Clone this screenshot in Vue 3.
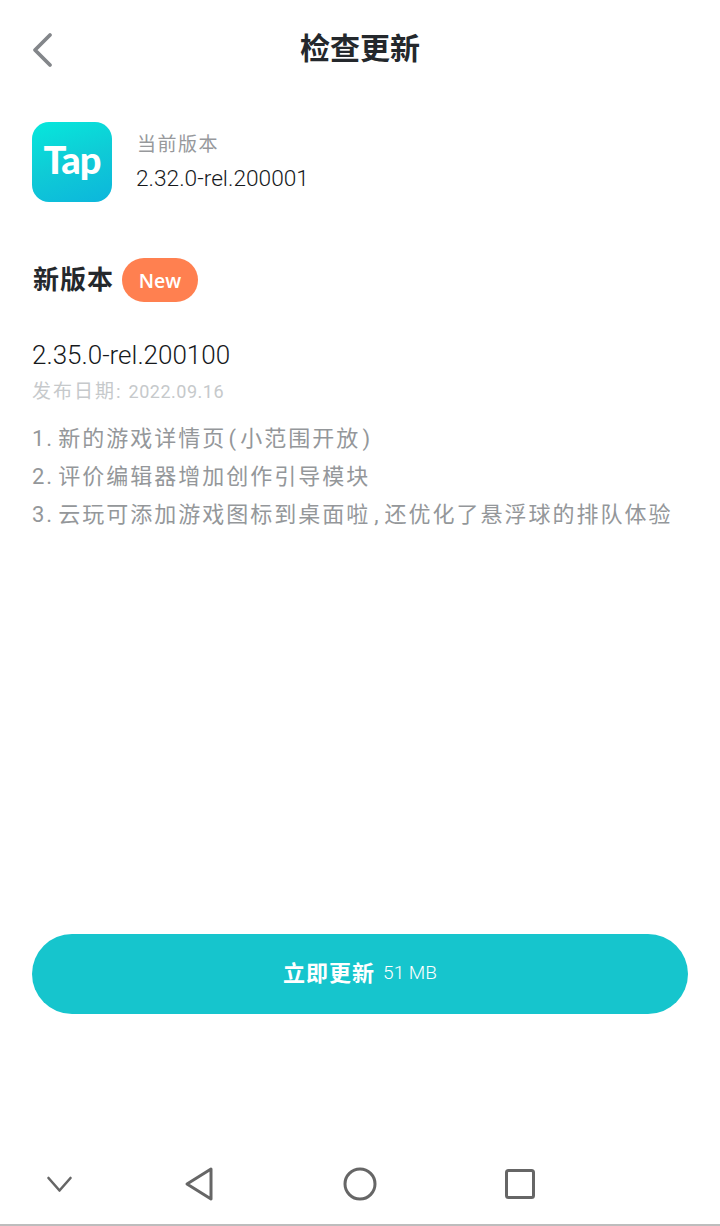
<template>
  <div class="page">
    <header class="top-bar">
      <svg class="back" width="24" height="36" viewBox="0 0 24 36">
        <path d="M20 3 L5 18 L20 33" fill="none" stroke="#83868a" stroke-width="3.8" stroke-linejoin="round" stroke-linecap="round" />
      </svg>
      <h1 class="title">检查更新</h1>
    </header>

    <section class="current">
      <div class="logo">Tap</div>
      <div class="current-info">
        <div class="current-label">当前版本</div>
        <div class="current-version">{{ currentVersion }}</div>
      </div>
    </section>

    <section class="new-head">
      <span class="new-title">新版本</span>
      <span class="badge">New</span>
    </section>

    <section class="release">
      <div class="release-version">{{ newVersion }}</div>
      <div class="release-date">
        <span class="date-label">发布日期:</span>
        <span class="date-value">2022.09.16</span>
      </div>
      <ol class="notes">
        <li v-for="(note, index) in notes" :key="index">
          <span class="note-num">{{ index + 1 }}.</span>
          <span
            v-for="(part, i) in splitNote(note)"
            :key="i"
            :class="punctClass(part)"
          >{{ part }}</span>
        </li>
      </ol>
    </section>

    <button class="update-btn">
      <span class="update-text">立即更新</span>
      <span class="update-size">51 MB</span>
    </button>

    <nav class="nav-bar">
      <svg width="28" height="20" viewBox="0 0 28 20">
        <path d="M2.5 4 L13.5 16.5 L24.5 4" fill="none" stroke="#666" stroke-width="2.6" stroke-linecap="round" stroke-linejoin="round" />
      </svg>
      <svg width="32" height="36" viewBox="0 0 32 36">
        <path d="M27 3 L3 18 L27 33 Z" fill="none" stroke="#666" stroke-width="3" stroke-linejoin="round" />
      </svg>
      <svg width="34" height="34" viewBox="0 0 34 34">
        <circle cx="17" cy="17" r="15" fill="none" stroke="#666" stroke-width="3" />
      </svg>
      <svg width="32" height="32" viewBox="0 0 32 32">
        <rect x="2.5" y="2.5" width="27" height="27" rx="2" fill="none" stroke="#666" stroke-width="3" />
      </svg>
    </nav>
  </div>
</template>

<script setup>
const currentVersion = "2.32.0-rel.200001";
const newVersion = "2.35.0-rel.200100";
const notes = [
  "新的游戏详情页(小范围开放)",
  "评价编辑器增加创作引导模块",
  "云玩可添加游戏图标到桌面啦,还优化了悬浮球的排队体验",
];

const splitNote = (note) => note.split(/([(),])/).filter(Boolean);
const punctClass = (part) => {
  if (part === ",") return "comma";
  return part === "(" || part === ")" ? "paren" : "";
};
</script>

<style>
html,
body {
  margin: 0;
  background: #fff;
}
</style>

<style scoped>
.page {
  width: 720px;
  height: 1226px;
  box-sizing: border-box;
  background: #fff;
  display: flex;
  flex-direction: column;
  font-family: Roboto, "Noto Sans CJK SC", sans-serif;
  color: #24282c;
  border-bottom: 2px solid #bdbdbd;
  overflow: hidden;
}

.top-bar {
  height: 98px;
  flex: none;
  position: relative;
  display: flex;
  align-items: center;
  justify-content: center;
}

.back {
  position: absolute;
  left: 30px;
  top: 32px;
}

.title {
  margin: 0;
  font-size: 30px;
  font-weight: 700;
  line-height: 40px;
}

.current {
  margin: 24px 0 0 32px;
  display: flex;
  align-items: center;
  gap: 24px;
}

.logo {
  width: 80px;
  height: 80px;
  border-radius: 17px;
  background: linear-gradient(160deg, #06e8dc 0%, #0fcbd6 50%, #0cb6dc 100%);
  color: #fff;
  font-family: Lato, sans-serif;
  font-size: 38px;
  font-weight: 900;
  letter-spacing: -1px;
  line-height: 74px;
  text-align: center;
}

.current-info {
  display: flex;
  flex-direction: column;
  gap: 7px;
}

.current-label {
  margin-top: 1px;
  font-size: 19px;
  line-height: 26px;
  letter-spacing: 1.5px;
  color: #97999c;
  padding-left: 1px;
}

.current-version {
  font-size: 22.7px;
  line-height: 28px;
  font-weight: 300;
  color: #16191c;
}

.new-head {
  margin: 56px 0 0 33px;
  display: flex;
  align-items: center;
  gap: 8px;
}

.new-title {
  font-size: 26px;
  font-weight: 700;
  line-height: 42px;
  letter-spacing: 1px;
}

.badge {
  width: 76px;
  height: 44px;
  border-radius: 22px;
  background: #ff8050;
  color: #fff;
  font-family: "Open Sans", sans-serif;
  font-size: 19.5px;
  font-weight: 600;
  display: flex;
  align-items: center;
  justify-content: center;
}

.release {
  margin: 36px 0 0 32px;
}

.release-version {
  font-size: 26px;
  line-height: 34px;
  font-weight: 300;
  color: #16191c;
}

.release-date {
  margin-top: 7px;
  font-size: 18px;
  line-height: 26px;
  color: #c6c9cb;
  display: flex;
  gap: 6px;
}

.date-label {
  font-size: 19px;
  letter-spacing: 2px;
}

.date-value {
  letter-spacing: 0.5px;
}

.notes {
  list-style: none;
  margin: 15px 0 0;
  padding: 0;
  font-size: 22px;
  line-height: 38px;
  letter-spacing: 2px;
  color: #94979a;
}

.note-num {
  margin-right: 4px;
}

.paren {
  padding: 0 2.25px;
}

.comma {
  padding: 0 4px;
}

.update-btn {
  margin: 400px 32px 0;
  height: 80px;
  flex: none;
  border: 0;
  border-radius: 40px;
  background: #16c5cd;
  color: #fff;
  font-family: inherit;
  display: flex;
  align-items: center;
  justify-content: center;
  gap: 8px;
  padding: 0 0 6px;
}

.update-text {
  font-size: 22px;
  font-weight: 700;
  letter-spacing: 1px;
}

.update-size {
  margin-top: 2px;
  font-size: 19px;
  font-weight: 300;
}

.nav-bar {
  margin-top: auto;
  height: 80px;
  flex: none;
  display: grid;
  grid-template-columns: 120px 160px 160px 160px;
  align-items: center;
  justify-items: center;
}
</style>
